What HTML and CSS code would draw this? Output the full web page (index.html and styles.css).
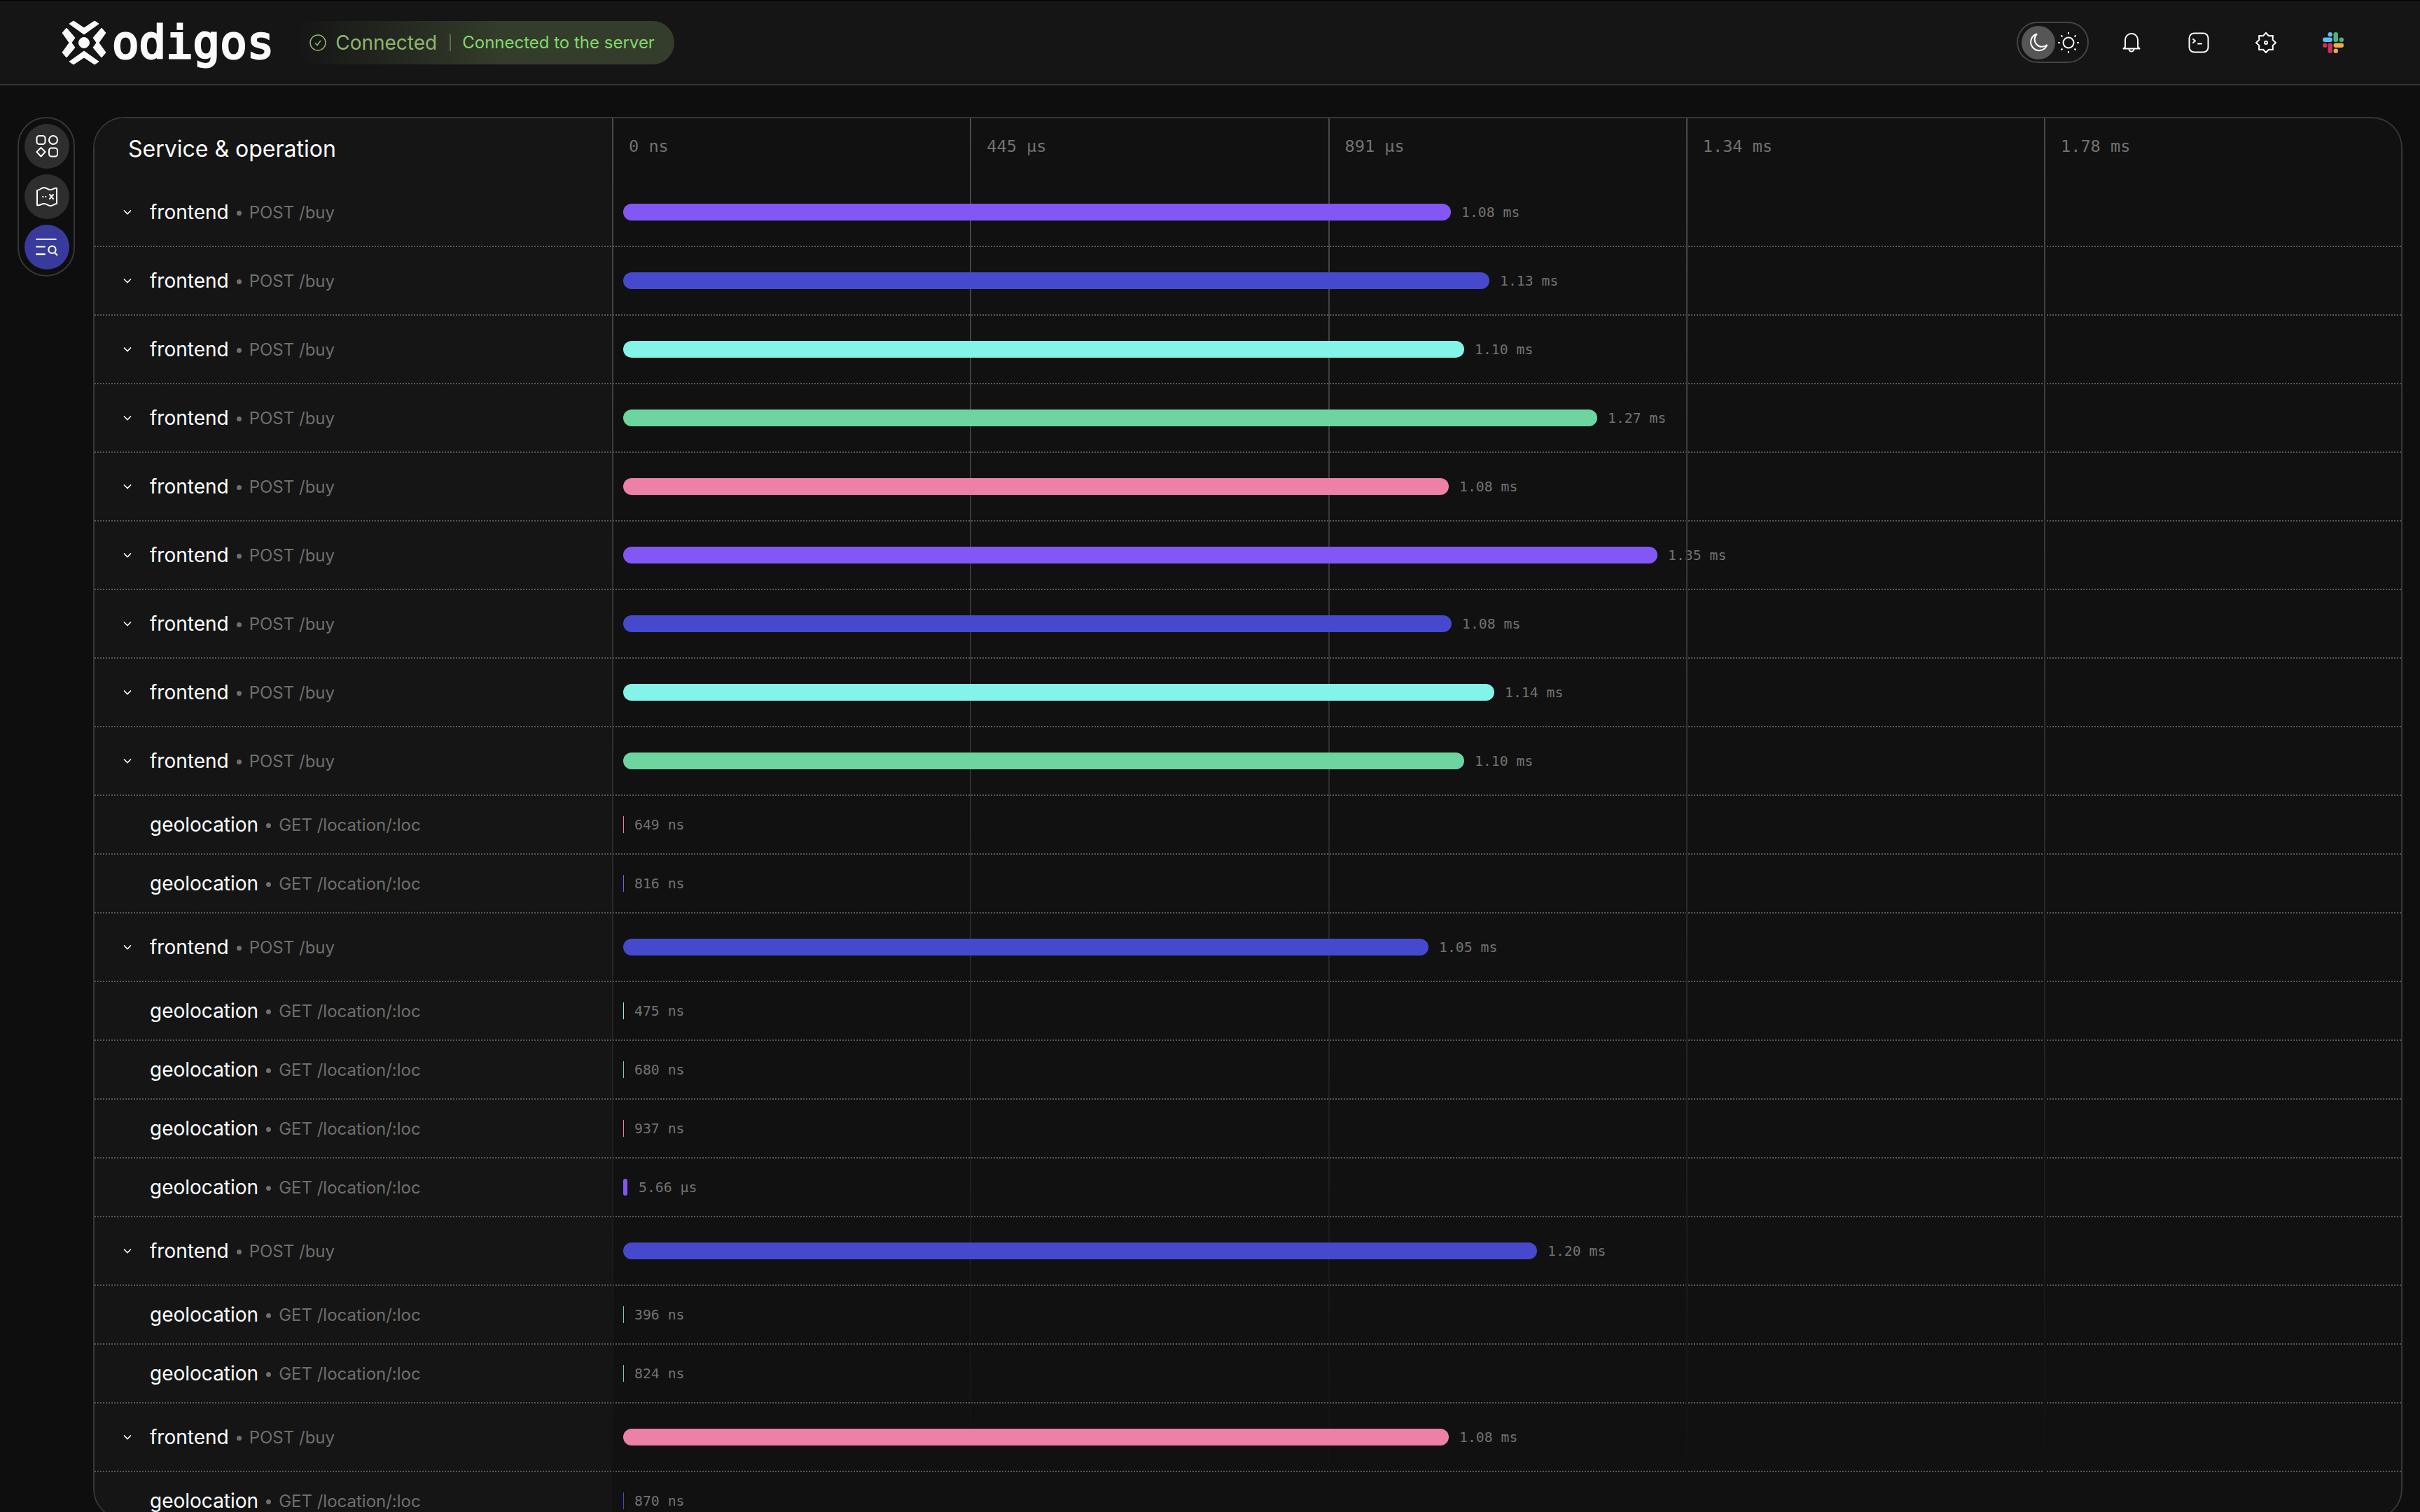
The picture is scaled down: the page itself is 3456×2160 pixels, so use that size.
FILE: index.html
```html
<!DOCTYPE html>
<html>
<head>
<title>Odigos - Trace</title>
<link rel="stylesheet" href="styles.css">
</head>
<body>

<header class="topbar">
	<div class="brand">
		<svg class="brand-mark" viewBox="0 0 64 64">
			<polygon points="11,5 17,1 32,11 47,1 53,5 32,20"/>
			<polygon points="11,59 17,63 32,53 47,63 53,59 32,44"/>
			<polygon points="1,18 7,11 19,25 14,32 19,39 7,53 1,46 11,32"/>
			<polygon points="63,18 57,11 45,25 50,32 45,39 57,53 63,46 53,32"/>
			<circle cx="32" cy="32" r="7.5"/>
		</svg>
		<span class="brand-name">odigos</span>
	</div>

	<div class="status">
		<svg class="status-icon" viewBox="0 0 24 24">
			<circle cx="12" cy="12" r="11"/>
			<path d="M8 12.5l3 3 5-6.5"/>
		</svg>
		<span class="status-title">Connected</span>
		<span class="status-sep"></span>
		<span class="status-text">Connected to the server</span>
	</div>

	<div class="actions">
		<div class="theme">
			<span class="theme-knob">
				<svg class="icon-moon" viewBox="0 0 28 28"><path d="M12 1.500A12 12 0 1 0 26.500 17 10.500 10.500 0 0 1 12 1.500z"/></svg>
			</span>
			<svg class="icon-sun" viewBox="0 0 32 32">
				<circle cx="16" cy="16" r="7.5"/>
				<path d="M16 1v3M16 28v3M1 16h3M28 16h3M5.5 5.5l2 2M24.5 24.5l2 2M5.5 26.5l2-2M24.5 7.5l2-2"/>
			</svg>
		</div>
		<button class="action">
			<svg class="icon-line" viewBox="0 0 26 30"><path d="M4 21V11a9 9 0 0 1 18 0v10l2.500 2.500H1.500z"/><path d="M9.500 24a3.500 3.500 0 0 0 7 0"/></svg>
		</button>
		<button class="action">
			<svg class="icon-line" viewBox="0 0 30 30"><rect x="1.500" y="1.500" width="27" height="27" rx="7"/><path d="M7 10l3 2.500-3 2.500M14 16.500h5"/></svg>
		</button>
		<button class="action">
			<svg class="icon-line" viewBox="-1 -1 30 30">
				<polygon points="14,0 18,4.300 23.900,4.100 23.700,10 28,14 23.700,18 23.900,23.900 18,23.700 14,28 10,23.700 4.100,23.900 4.300,18 0,14 4.300,10 4.100,4.100 10,4.300"/>
				<circle cx="14" cy="14" r="2"/>
			</svg>
		</button>
		<button class="action">
			<svg class="icon-slack" viewBox="0 0 28 28">
				<rect class="s-blue" x="0" y="7" width="13" height="6" rx="3"/>
				<rect class="s-blue" x="7" y="0" width="6" height="6" rx="3"/>
				<rect class="s-green" x="14.500" y="0" width="6" height="13" rx="3"/>
				<rect class="s-green" x="22" y="7" width="6" height="6" rx="3"/>
				<rect class="s-yellow" x="14.500" y="14.500" width="13.500" height="6" rx="3"/>
				<rect class="s-yellow" x="14.500" y="22" width="6" height="6" rx="3"/>
				<rect class="s-red" x="7" y="14.500" width="6" height="13.500" rx="3"/>
				<rect class="s-red" x="0" y="14.500" width="6" height="6" rx="3"/>
			</svg>
		</button>
	</div>
</header>

<div class="page">

	<nav class="rail">
		<button class="rail-btn">
			<svg class="icon-line" viewBox="0 0 32 32">
				<rect x="1.500" y="1" width="12" height="12" rx="3.500"/>
				<circle cx="25" cy="7" r="6"/>
				<path d="M7.500 18l6 6-6 6.500-6-6.500z"/>
				<rect x="19" y="18.500" width="12" height="12" rx="3.500"/>
			</svg>
		</button>
		<button class="rail-btn">
			<svg class="icon-line" viewBox="0 0 32 28">
				<path d="M2 5c5-1 6-4 10-4s6 4 10 3 6-3 8-2v22c-3 0-5 3-9 3s-6-4-10-3-6 3-9 2z"/>
				<path class="thin" d="M10 14h.5M14 14h.5"/>
				<path d="M20 11l5 6M25 11l-5 6"/>
			</svg>
		</button>
		<button class="rail-btn active">
			<svg class="icon-line" viewBox="0 0 30 24">
				<path d="M1 1.500h26M1 11.500h11M1 21.500h11"/>
				<circle cx="22" cy="15.500" r="4.800"/>
				<path d="M25.500 19.500l3 3"/>
			</svg>
		</button>
	</nav>

	<main class="panel">

		<div class="table-head">
			<div class="col-name"><h2 class="head-title">Service &amp; operation</h2></div>
			<div class="ticks">
				<span class="tick">0 ns</span>
				<span class="tick">445 µs</span>
				<span class="tick">891 µs</span>
				<span class="tick">1.34 ms</span>
				<span class="tick">1.78 ms</span>
			</div>
		</div>

		<div class="row">
			<div class="col-name"><svg class="chevron" viewBox="0 0 12 8"><path d="M1 1.500l5 5 5-5"/></svg><span class="svc">frontend</span><span class="dot"></span><span class="op">POST /buy</span></div>
			<div class="track"><span class="bar violet" style="width:1182px"></span><span class="dur">1.08 ms</span></div>
		</div>
		<div class="row">
			<div class="col-name"><svg class="chevron" viewBox="0 0 12 8"><path d="M1 1.500l5 5 5-5"/></svg><span class="svc">frontend</span><span class="dot"></span><span class="op">POST /buy</span></div>
			<div class="track"><span class="bar blue" style="width:1237px"></span><span class="dur">1.13 ms</span></div>
		</div>
		<div class="row">
			<div class="col-name"><svg class="chevron" viewBox="0 0 12 8"><path d="M1 1.500l5 5 5-5"/></svg><span class="svc">frontend</span><span class="dot"></span><span class="op">POST /buy</span></div>
			<div class="track"><span class="bar cyan" style="width:1201px"></span><span class="dur">1.10 ms</span></div>
		</div>
		<div class="row">
			<div class="col-name"><svg class="chevron" viewBox="0 0 12 8"><path d="M1 1.500l5 5 5-5"/></svg><span class="svc">frontend</span><span class="dot"></span><span class="op">POST /buy</span></div>
			<div class="track"><span class="bar green" style="width:1391px"></span><span class="dur">1.27 ms</span></div>
		</div>
		<div class="row">
			<div class="col-name"><svg class="chevron" viewBox="0 0 12 8"><path d="M1 1.500l5 5 5-5"/></svg><span class="svc">frontend</span><span class="dot"></span><span class="op">POST /buy</span></div>
			<div class="track"><span class="bar pink" style="width:1179px"></span><span class="dur">1.08 ms</span></div>
		</div>
		<div class="row">
			<div class="col-name"><svg class="chevron" viewBox="0 0 12 8"><path d="M1 1.500l5 5 5-5"/></svg><span class="svc">frontend</span><span class="dot"></span><span class="op">POST /buy</span></div>
			<div class="track"><span class="bar violet" style="width:1477px"></span><span class="dur">1.35 ms</span></div>
		</div>
		<div class="row">
			<div class="col-name"><svg class="chevron" viewBox="0 0 12 8"><path d="M1 1.500l5 5 5-5"/></svg><span class="svc">frontend</span><span class="dot"></span><span class="op">POST /buy</span></div>
			<div class="track"><span class="bar blue" style="width:1183px"></span><span class="dur">1.08 ms</span></div>
		</div>
		<div class="row">
			<div class="col-name"><svg class="chevron" viewBox="0 0 12 8"><path d="M1 1.500l5 5 5-5"/></svg><span class="svc">frontend</span><span class="dot"></span><span class="op">POST /buy</span></div>
			<div class="track"><span class="bar cyan" style="width:1244px"></span><span class="dur">1.14 ms</span></div>
		</div>
		<div class="row">
			<div class="col-name"><svg class="chevron" viewBox="0 0 12 8"><path d="M1 1.500l5 5 5-5"/></svg><span class="svc">frontend</span><span class="dot"></span><span class="op">POST /buy</span></div>
			<div class="track"><span class="bar green" style="width:1201px"></span><span class="dur">1.10 ms</span></div>
		</div>
		<div class="row short">
			<div class="col-name"><span class="svc">geolocation</span><span class="dot"></span><span class="op">GET /location/:loc</span></div>
			<div class="track"><span class="tiny pink"></span><span class="dur">649 ns</span></div>
		</div>
		<div class="row short">
			<div class="col-name"><span class="svc">geolocation</span><span class="dot"></span><span class="op">GET /location/:loc</span></div>
			<div class="track"><span class="tiny violet"></span><span class="dur">816 ns</span></div>
		</div>
		<div class="row">
			<div class="col-name"><svg class="chevron" viewBox="0 0 12 8"><path d="M1 1.500l5 5 5-5"/></svg><span class="svc">frontend</span><span class="dot"></span><span class="op">POST /buy</span></div>
			<div class="track"><span class="bar blue" style="width:1150px"></span><span class="dur">1.05 ms</span></div>
		</div>
		<div class="row short">
			<div class="col-name"><span class="svc">geolocation</span><span class="dot"></span><span class="op">GET /location/:loc</span></div>
			<div class="track"><span class="tiny cyan"></span><span class="dur">475 ns</span></div>
		</div>
		<div class="row short">
			<div class="col-name"><span class="svc">geolocation</span><span class="dot"></span><span class="op">GET /location/:loc</span></div>
			<div class="track"><span class="tiny green"></span><span class="dur">680 ns</span></div>
		</div>
		<div class="row short">
			<div class="col-name"><span class="svc">geolocation</span><span class="dot"></span><span class="op">GET /location/:loc</span></div>
			<div class="track"><span class="tiny pink"></span><span class="dur">937 ns</span></div>
		</div>
		<div class="row short">
			<div class="col-name"><span class="svc">geolocation</span><span class="dot"></span><span class="op">GET /location/:loc</span></div>
			<div class="track"><span class="tiny wide violet"></span><span class="dur">5.66 µs</span></div>
		</div>
		<div class="row">
			<div class="col-name"><svg class="chevron" viewBox="0 0 12 8"><path d="M1 1.500l5 5 5-5"/></svg><span class="svc">frontend</span><span class="dot"></span><span class="op">POST /buy</span></div>
			<div class="track"><span class="bar blue" style="width:1305px"></span><span class="dur">1.20 ms</span></div>
		</div>
		<div class="row short">
			<div class="col-name"><span class="svc">geolocation</span><span class="dot"></span><span class="op">GET /location/:loc</span></div>
			<div class="track"><span class="tiny green"></span><span class="dur">396 ns</span></div>
		</div>
		<div class="row short">
			<div class="col-name"><span class="svc">geolocation</span><span class="dot"></span><span class="op">GET /location/:loc</span></div>
			<div class="track"><span class="tiny green"></span><span class="dur">824 ns</span></div>
		</div>
		<div class="row">
			<div class="col-name"><svg class="chevron" viewBox="0 0 12 8"><path d="M1 1.500l5 5 5-5"/></svg><span class="svc">frontend</span><span class="dot"></span><span class="op">POST /buy</span></div>
			<div class="track"><span class="bar pink" style="width:1179px"></span><span class="dur">1.08 ms</span></div>
		</div>
		<div class="row short">
			<div class="col-name"><span class="svc">geolocation</span><span class="dot"></span><span class="op">GET /location/:loc</span></div>
			<div class="track"><span class="tiny blue"></span><span class="dur">870 ns</span></div>
		</div>

		<div class="gridlines">
			<span class="gridline"></span>
			<span class="gridline"></span>
			<span class="gridline"></span>
			<span class="gridline"></span>
			<span class="gridline"></span>
		</div>

	</main>

</div>

</body>
</html>
```

FILE: styles.css
```css
* {
	box-sizing: border-box;
}

html, body {
	height: 100%;
}

body {
	margin: 0;
	overflow: hidden;
	background-color: #0e0e0e;
	color: #fff;
	font-family: "Inter", "Liberation Sans", sans-serif;
}

/* top bar */

.topbar {
	display: flex;
	align-items: center;
	height: 122px;
	padding: 0 0 0 88px;
	background-color: #151515;
	border-top: 1px solid #000;
	border-bottom: 2px solid #363636;
}

.brand {
	display: flex;
	align-items: center;
	gap: 8px;
}

.brand-mark {
	width: 64px;
	height: 64px;
	fill: #fafafa;
	stroke: #fafafa;
	stroke-width: 1;
	stroke-linejoin: round;
}

.brand-name {
	font-family: "DejaVu Sans Mono", monospace;
	font-size: 64px;
	line-height: 64px;
	color: #fafafa;
	-webkit-text-stroke: 3px #fafafa;
}

.status {
	display: flex;
	align-items: center;
	height: 62px;
	margin-left: 31px;
	padding: 0 28px 0 20px;
	border-radius: 31px;
	background: linear-gradient(90deg, rgba(52, 62, 43, 0) 0%, #343d2b 55%, #343d2b 100%);
}

.status-icon {
	width: 24px;
	height: 24px;
	fill: none;
	stroke: #8fb56f;
	stroke-width: 1.5;
}

.status-title {
	margin-left: 13px;
	font-size: 28px;
	color: #8fb56f;
}

.status-sep {
	width: 2px;
	height: 24px;
	margin: 0 16px 0 18px;
	background-color: #5c6b4e;
}

.status-text {
	font-size: 24px;
	color: #81d96c;
}

.actions {
	display: flex;
	align-items: center;
	margin-left: auto;
	padding-right: 76px;
}

.theme {
	display: flex;
	align-items: center;
	width: 103px;
	height: 59px;
	margin-right: 13px;
	padding-left: 5px;
	border: 2px solid #444;
	border-radius: 30px;
}

.theme-knob {
	display: flex;
	align-items: center;
	justify-content: center;
	width: 48px;
	height: 48px;
	border-radius: 50%;
	background-color: #565656;
}

.icon-moon {
	width: 28px;
	height: 28px;
	fill: none;
	stroke: #fff;
	stroke-width: 2;
}

.icon-sun {
	width: 32px;
	height: 32px;
	margin-left: 3px;
	fill: none;
	stroke: #fff;
	stroke-width: 2;
}

.action {
	display: flex;
	align-items: center;
	justify-content: center;
	width: 96px;
	height: 40px;
	padding: 0;
	border: 0;
	background: none;
}

.action svg {
	height: 30px;
	width: 30px;
}

.icon-line {
	fill: none;
	stroke: #fff;
	stroke-width: 2;
	stroke-linecap: round;
	stroke-linejoin: round;
}

.s-blue { fill: #5bbfea; }
.s-green { fill: #4fb381; }
.s-yellow { fill: #e6b04a; }
.s-red { fill: #cf2f5c; }

/* page */

.page {
	display: flex;
	align-items: flex-start;
	gap: 26px;
	padding: 45px 25px 0 25px;
}

.rail {
	display: flex;
	flex-direction: column;
	flex: none;
	gap: 8px;
	width: 82px;
	padding: 8px;
	border: 2px solid #363636;
	border-radius: 41px;
}

.rail-btn {
	display: flex;
	align-items: center;
	justify-content: center;
	width: 64px;
	height: 64px;
	padding: 0;
	border: 0;
	border-radius: 50%;
	background-color: #2e2e2e;
}

.rail-btn svg {
	width: 32px;
	height: 32px;
}

.rail-btn.active {
	background-color: #383a9c;
}

.rail-btn .thin {
	stroke-width: 2;
}

/* table */

.panel {
	position: relative;
	flex: 1;
	height: 2004px;
	overflow: hidden;
	border: 2px solid #363636;
	border-radius: 44px;
	background-color: #111;
}

.table-head {
	display: flex;
	height: 86px;
}

.col-name {
	display: flex;
	align-items: center;
	flex: 0 0 740px;
	padding-left: 79px;
	background-color: #151515;
	position: relative;
}

.table-head .col-name {
	padding-left: 48px;
	padding-top: 2px;
}

.head-title {
	margin: 0;
	font-size: 32px;
	font-weight: 400;
	line-height: 40px;
}

.ticks {
	display: flex;
	flex: 1;
}

.tick {
	flex: 0 0 511.25px;
	padding: 25px 0 0 23px;
	font-family: "DejaVu Sans Mono", monospace;
	font-size: 23.600px;
	line-height: 30px;
	color: #727272;
}

.row {
	display: flex;
	height: 98px;
	background-image: linear-gradient(90deg, #585858 2px, transparent 2px);
	background-size: 4px 2px;
	background-position: 0 100%;
	background-repeat: repeat-x;
}

.row.short {
	height: 84px;
}

.row .col-name,
.row .track {
	margin-bottom: 2px;
}

.chevron {
	position: absolute;
	left: 41px;
	top: 50%;
	width: 12px;
	height: 8px;
	margin-top: -4px;
	fill: none;
	stroke: #fff;
	stroke-width: 1.6;
}

.svc {
	font-size: 28px;
	line-height: 36px;
}

.dot {
	width: 7px;
	height: 7px;
	margin: 2px 11px 0 11px;
	border-radius: 50%;
	background-color: #6f6f6f;
}

.op {
	padding-top: 2px;
	font-size: 24px;
	line-height: 36px;
	color: #6f6f6f;
}

.track {
	display: flex;
	align-items: center;
	flex: 1;
	padding-left: 15px;
}

.bar {
	position: relative;
	z-index: 2;
	height: 24px;
	border-radius: 12px;
}

.tiny {
	position: relative;
	z-index: 2;
	width: 1px;
	height: 24px;
}

.tiny.wide {
	width: 6px;
	border-radius: 3px;
}

.dur {
	margin-left: 15px;
	padding-top: 2px;
	font-family: "DejaVu Sans Mono", monospace;
	font-size: 19.800px;
	line-height: 24px;
	color: #727272;
}

.tiny.wide + .dur {
	margin-left: 16px;
}

.bar + .dur {
	margin-left: 15px;
}

.violet { background-color: #8257f6; }
.blue { background-color: #4649cd; }
.cyan { background-color: #85f4e8; }
.green { background-color: #6dd5a0; }
.pink { background-color: #ed80a6; }

/* lines of the time scale, drawn over the rows */

.gridlines {
	position: absolute;
	z-index: 1;
	top: 0;
	bottom: 0;
	left: 739px;
	display: flex;
	pointer-events: none;
}

.gridline {
	flex: none;
	width: 511.25px;
	border-left: 2px solid;
	border-image: linear-gradient(#4a4a4a, #111 98%) 1;
}
```
